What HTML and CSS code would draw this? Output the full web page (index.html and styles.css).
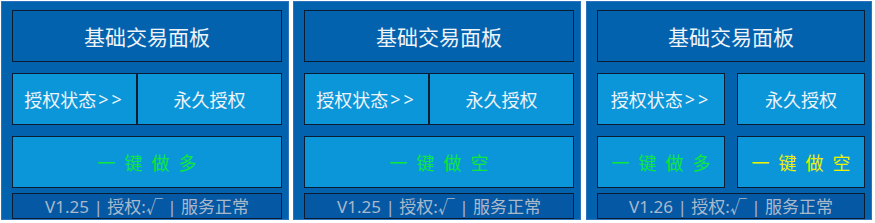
FILE: index.html
```html
<!DOCTYPE html>
<html lang="zh-CN">
<head>
  <meta charset="UTF-8">
  <title>基础交易面板</title>
  <link rel="stylesheet" href="styles.css">
</head>
<body>
  <div class="panels">
    <div class="panel">
      <div class="btn btn-title">基础交易面板</div>
      <div class="row row-joined">
        <div class="btn btn-light">授权状态<span class="arrows">&gt;&gt;</span></div>
        <div class="btn btn-light">永久授权</div>
      </div>
      <div class="row">
        <div class="btn btn-light btn-action long">一键做多</div>
      </div>
      <div class="status">V1.25 | 授权:√ | 服务正常</div>
    </div>

    <div class="panel">
      <div class="btn btn-title">基础交易面板</div>
      <div class="row row-joined">
        <div class="btn btn-light">授权状态<span class="arrows">&gt;&gt;</span></div>
        <div class="btn btn-light">永久授权</div>
      </div>
      <div class="row">
        <div class="btn btn-light btn-action long">一键做空</div>
      </div>
      <div class="status">V1.25 | 授权:√ | 服务正常</div>
    </div>

    <div class="panel panel-narrow">
      <div class="btn btn-title">基础交易面板</div>
      <div class="row row-split">
        <div class="btn btn-light">授权状态<span class="arrows">&gt;&gt;</span></div>
        <div class="btn btn-light">永久授权</div>
      </div>
      <div class="row row-split">
        <div class="btn btn-light btn-action long">一键做多</div>
        <div class="btn btn-light btn-action short">一键做空</div>
      </div>
      <div class="status">V1.26 | 授权:√ | 服务正常</div>
    </div>
  </div>
</body>
</html>
```

FILE: styles.css
```css
html, body {margin:0; padding:0; background:#fff; font-family:"Noto Sans CJK SC","Noto Sans",sans-serif;}
.panels {display:flex; gap:4px; padding:1px 0 0 1px;}
.panel {width:288px; height:219px; box-sizing:border-box; background:#0362ae; border:1px solid #2c72bc; padding:8px 6px 0 10px; display:flex; flex-direction:column;}
.panel-narrow {width:286px; margin-left:1px;}
.btn {box-sizing:border-box; border:1px solid #0b1c30; display:flex; align-items:center; justify-content:center; color:#eef3f8; font-size:18px; line-height:1;}
.btn-title {height:52px; background:#0362ae; font-size:21px;}
.btn-light {background:#0a96d8;}
.arrows {font-family:"Noto Sans",sans-serif; letter-spacing:3px; margin-left:2px;}
.row {display:flex; height:52px; margin-top:11px;}
.row .btn {flex:1;}
.row-joined .btn:first-child {flex:0 0 125px;}
.row-split {gap:12px;}
.btn-action {letter-spacing:9px; padding-left:9px;}
.long {color:#0ee83a;}
.short {color:#eef200;}
.status {height:26px; margin-top:5px; box-sizing:border-box; border:1px solid #0b1c30; background:#0558a4; color:#a9b9cc; font-size:17px; font-family:"Noto Sans","Noto Sans CJK SC",sans-serif; display:flex; align-items:center; justify-content:center; line-height:1;}
```
